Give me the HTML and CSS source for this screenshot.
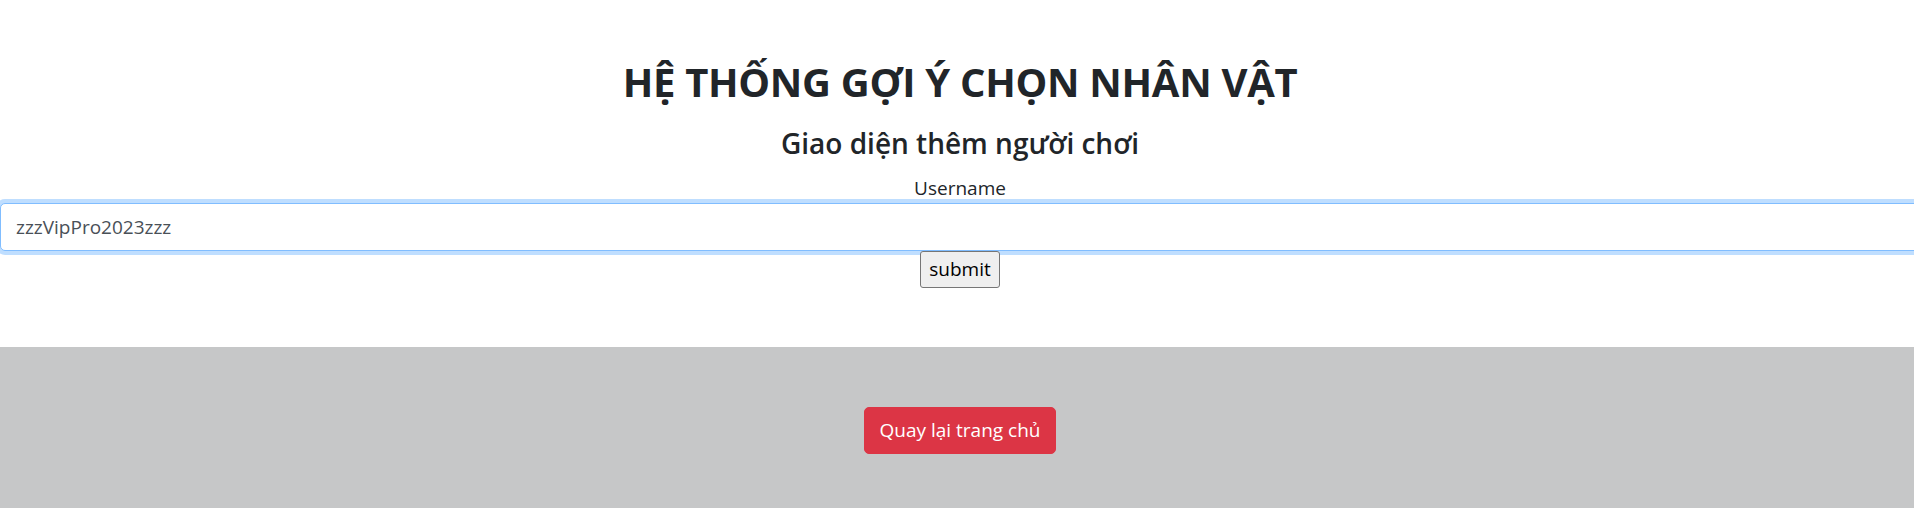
FILE: index.html
```html
<!DOCTYPE html>
<html lang="vi">
<head>
<meta charset="utf-8">
<title>Thêm người chơi</title>
<link rel="stylesheet" href="styles.css">
</head>
<body>
<div class="page">
  <main class="content">
    <h1 class="title">HỆ THỐNG GỢI Ý CHỌN NHÂN VẬT</h1>
    <h4 class="subtitle">Giao diện thêm người chơi</h4>
    <form class="player-form">
      <label class="field-label" for="username">Username</label>
      <input class="field-input is-focused" id="username" type="text" value="zzzVipPro2023zzz">
      <button class="submit-btn" type="button">submit</button>
    </form>
  </main>
  <footer class="footer">
    <a class="btn-danger" href="#">Quay lại trang chủ</a>
  </footer>
</div>
</body>
</html>
```

FILE: styles.css
```css
html, body {
  margin: 0;
  padding: 0;
  overflow: hidden;
  background: #ffffff;
}

.page {
  width: 1920px;
  font-family: "Open Sans", "Noto Sans", sans-serif;
  color: #212529;
}

.content {
  display: flex;
  flex-direction: column;
  align-items: center;
  padding-top: 58px;
  padding-bottom: 59px;
}

.title {
  margin: 0;
  font-size: 40px;
  line-height: 48px;
  font-weight: 700;
  letter-spacing: -0.3px;
}

.subtitle {
  margin: 20px 0 0;
  font-size: 28px;
  line-height: 34px;
  font-weight: 600;
  letter-spacing: 0;
}

.player-form {
  align-self: stretch;
  display: flex;
  flex-direction: column;
  align-items: center;
  margin-top: 13px;
}

.field-label {
  font-size: 19px;
  line-height: 30px;
  color: #212529;
}

.field-input {
  align-self: stretch;
  box-sizing: border-box;
  height: 47.5px;
  margin: 0;
  padding: 7.5px 15px;
  font-family: inherit;
  font-size: 19px;
  color: #495057;
  background: #ffffff;
  border: 1.25px solid #ced4da;
  border-radius: 5px;
  outline: none;
}

.field-input.is-focused {
  border-color: #80bdff;
  box-shadow: 0 0 0 4px rgba(0, 123, 255, 0.25);
}

.submit-btn {
  box-sizing: border-box;
  height: 37px;
  margin: 0;
  padding: 0 8px;
  font-family: inherit;
  font-size: 19px;
  color: #000000;
  background: #efefef;
  border: 1px solid #767676;
  border-radius: 3px;
}

.footer {
  display: flex;
  justify-content: center;
  padding: 60px 0;
  background: #c6c7c8;
}

.btn-danger {
  display: inline-block;
  padding: 7.5px 15px;
  font-size: 19px;
  line-height: 30px;
  color: #ffffff;
  background: #dc3545;
  border: 1.25px solid #dc3545;
  border-radius: 5px;
  text-decoration: none;
}
```
